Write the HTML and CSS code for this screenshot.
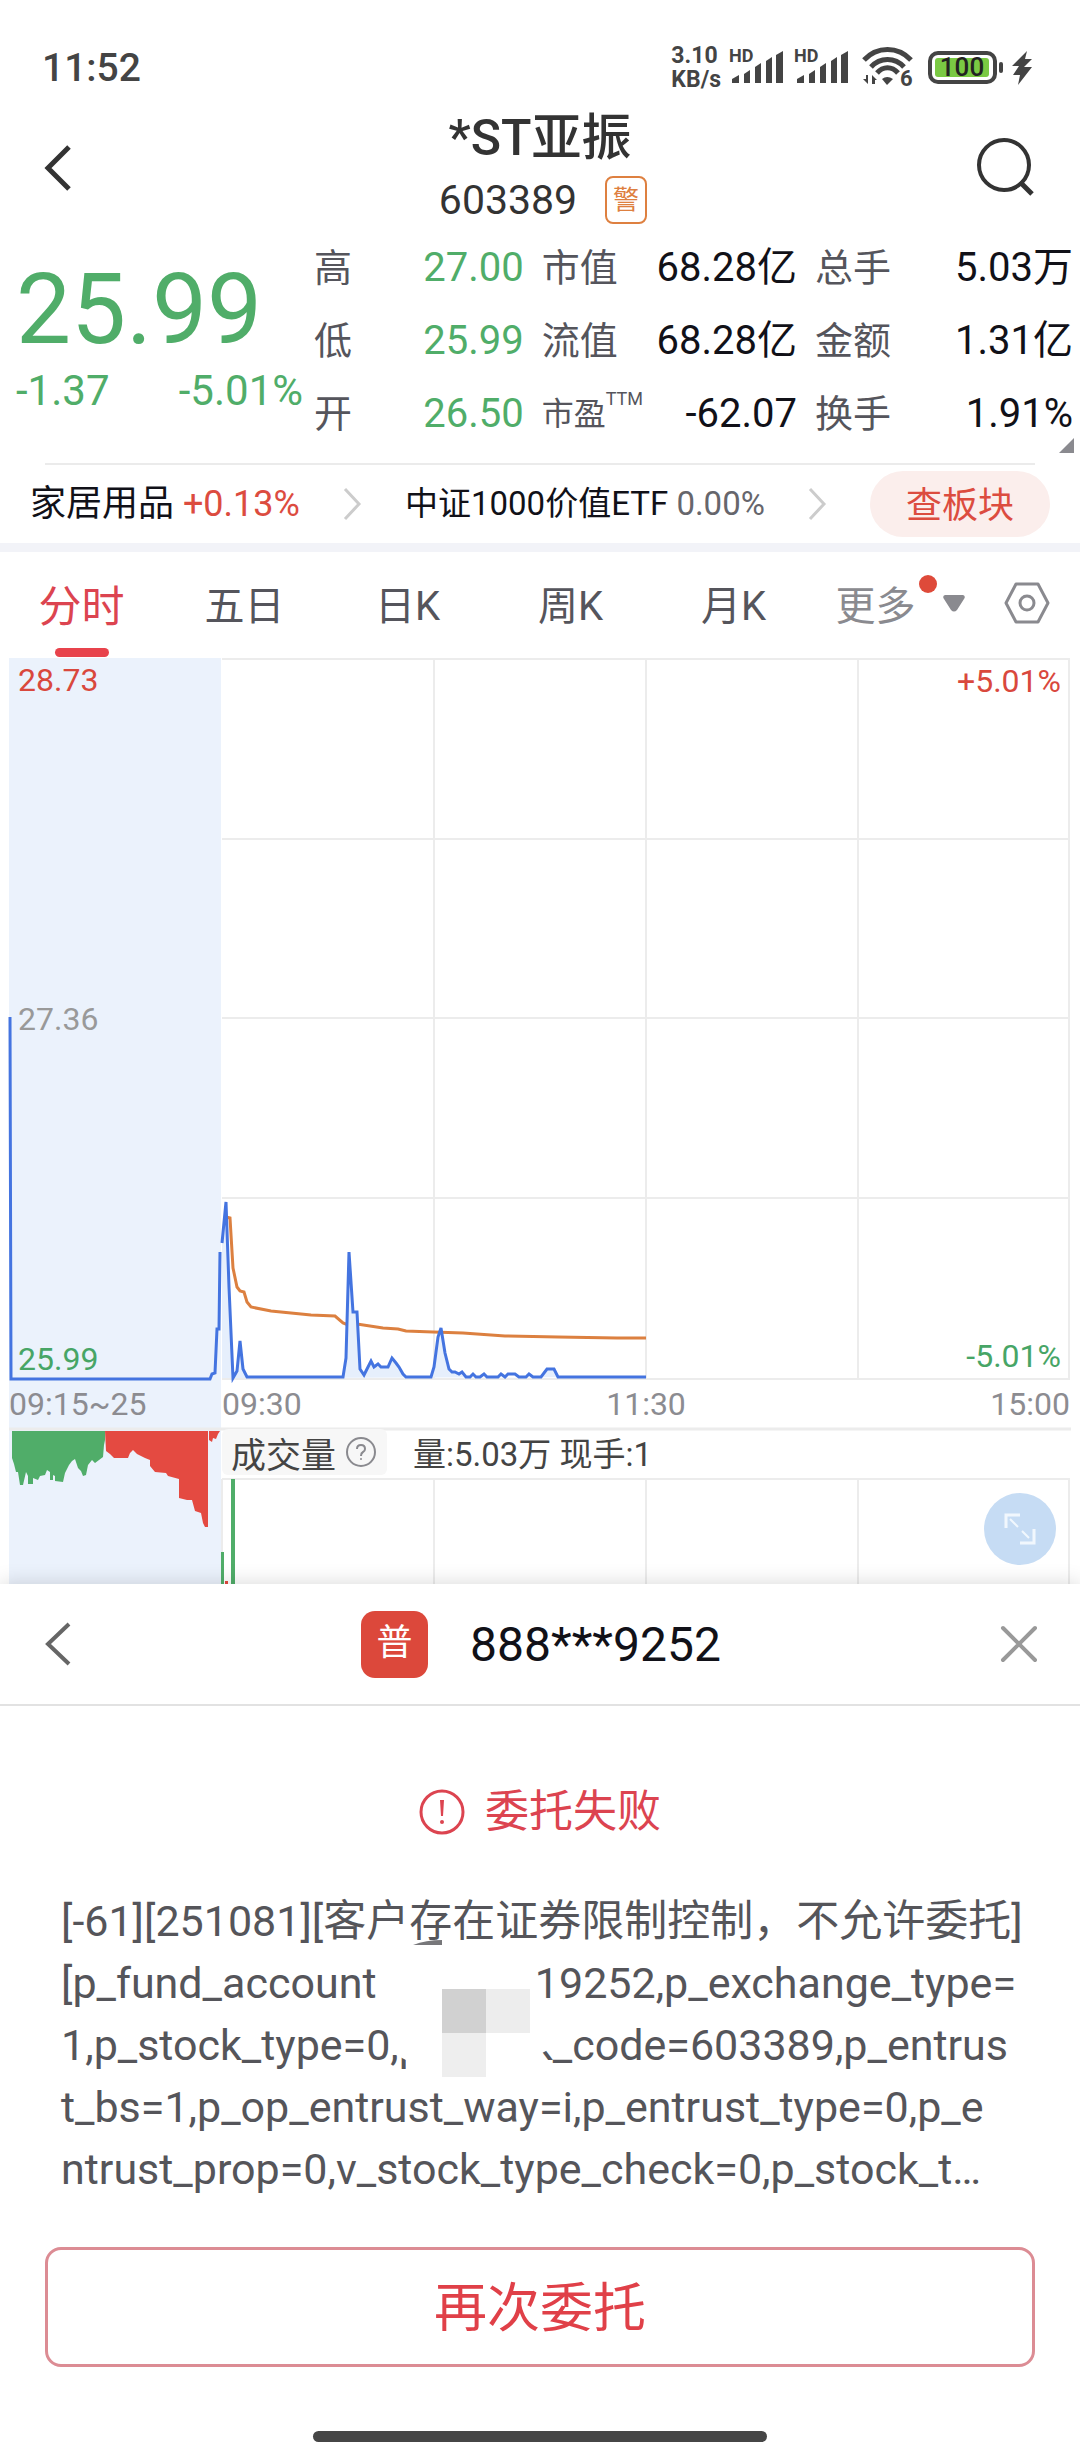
FILE: index.html
```html
<!DOCTYPE html>
<html lang="zh-CN">
<head>
<meta charset="utf-8">
<meta name="viewport" content="width=device-width, initial-scale=1.0">
<title>*ST亚振 603389</title>
<link rel="stylesheet" href="styles.css">
</head>
<body>

<div class="statusbar">
	<span class="clock">11:52</span>
	<div class="sys">
		<div class="speed"><div>3.10</div><div>KB/s</div></div>
		<svg class="signal" width="54" height="46" viewBox="0 -6 54 46">
			<text x="0" y="14" class="hd">HD</text>
			<path d="M3 35v-4l7-4v8zM15 35v-9l6-4v13zM26 35V19l6-4v20zM37 35V13l6-4v26zM47 35V7l7-4v32z"/>
		</svg>
		<svg class="signal" width="54" height="46" viewBox="0 -6 54 46">
			<text x="0" y="14" class="hd">HD</text>
			<path d="M3 35v-4l7-4v8zM15 35v-9l6-4v13zM26 35V19l6-4v20zM37 35V13l6-4v26zM47 35V7l7-4v32z"/>
		</svg>
		<svg class="wifi" width="54" height="50" viewBox="0 -3 54 50">
			<g fill="none" stroke="#444" stroke-width="5">
				<path d="M2 14C15 0 36 0 49 14"/>
				<path d="M9 21C18 11 33 11 42 21"/>
				<path d="M15 27C21 20 30 20 36 27"/>
			</g>
			<path d="M20 33q5-4 11 0l-6 6z"/>
			<path d="M6 29v9l-5-5h3v-4zM10 38v-9l5 5h-2v4z"/>
			<text x="38" y="40" class="six">6</text>
		</svg>
		<svg class="battery" width="76" height="34" viewBox="0 0 76 34">
			<rect x="2" y="2" width="65" height="29" rx="8" fill="#fff" stroke="#444" stroke-width="4"/>
			<rect x="7" y="7" width="54" height="19" rx="3" fill="#7ac943"/>
			<rect x="71" y="11" width="4" height="11" rx="2"/>
			<text x="34" y="25" text-anchor="middle" class="pct">100</text>
		</svg>
		<svg class="bolt" width="20" height="34" viewBox="0 0 20 34"><path d="M15 0L0 15h7l-6 9h7L6 34 20 16h-8l8-8h-7z"/></svg>
	</div>
</div>

<header class="topbar">
	<button class="icon-btn" aria-label="返回">
		<svg width="28" height="46" viewBox="0 0 28 46"><path d="M25 2L4 23l21 21" fill="none" stroke="#333" stroke-width="5"/></svg>
	</button>
	<div class="stock">
		<h1>*ST亚振</h1>
		<div class="code"><span>603389</span><span class="warn">警</span></div>
	</div>
	<button class="icon-btn" aria-label="搜索">
		<svg width="60" height="60" viewBox="0 0 60 60"><circle cx="28" cy="27" r="25" fill="none" stroke="#333" stroke-width="4"/><path d="M44 44l12 12" stroke="#333" stroke-width="5"/></svg>
	</button>
</header>

<section class="quote">
	<div class="now">
		<div class="price">25.99</div>
		<div class="change"><span>-1.37</span><span>-5.01%</span></div>
	</div>
	<table class="stats">
		<colgroup><col class="c1"><col class="c2"><col class="c3"><col class="c2"><col class="c4"><col class="c5"></colgroup>
		<tr><th>高</th><td class="down">27.00</td><th>市值</th><td>68.28亿</td><th>总手</th><td>5.03万</td></tr>
		<tr><th>低</th><td class="down">25.99</td><th>流值</th><td>68.28亿</td><th>金额</th><td>1.31亿</td></tr>
		<tr><th>开</th><td class="down">26.50</td><th class="pe">市盈<sup>TTM</sup></th><td>-62.07</td><th>换手</th><td>1.91%</td></tr>
	</table>
	<span class="corner"></span>
</section>

<div class="divider"></div>
<nav class="sectors">
	<a href="#" class="sector">家居用品 <span class="up">+0.13%</span></a>
	<svg class="arrow" width="20" height="34" viewBox="0 0 20 34"><path d="M3 2l14 15L3 32" fill="none" stroke="#ccc" stroke-width="3"/></svg>
	<a href="#" class="sector etf">中证1000价值ETF <span class="flat">0.00%</span></a>
	<svg class="arrow" width="20" height="34" viewBox="0 0 20 34"><path d="M3 2l14 15L3 32" fill="none" stroke="#ccc" stroke-width="3"/></svg>
	<button class="pill">查板块</button>
</nav>

<nav class="tabs">
	<button class="tab active">分时</button>
	<button class="tab">五日</button>
	<button class="tab">日K</button>
	<button class="tab">周K</button>
	<button class="tab">月K</button>
	<button class="tab more"><span class="more-text">更多<span class="dot"></span></span><svg width="22" height="17" viewBox="0 0 22 17"><path d="M2 0h18q3 1 1 4l-7 11q-3 3-6 0L1 4q-2-3 1-4z" fill="#8a8a8f"/></svg></button>
	<button class="tab gear" aria-label="设置">
		<svg width="46" height="42" viewBox="0 0 46 42"><path d="M12 2h22l10 19-10 19H12L2 21z" fill="none" stroke="#8a8a8f" stroke-width="3" stroke-linejoin="round"/><circle cx="23" cy="21" r="7" fill="none" stroke="#8a8a8f" stroke-width="3"/></svg>
	</button>
</nav>

<section class="chart">
	<svg class="plot" viewBox="0 0 1080 926">
		<rect x="9" y="0" width="212" height="926" fill="#ebf2fc"/>
		<!-- grid -->
		<g stroke="#ececec" stroke-width="2">
			<path d="M222 1H1070M222 181H1070M222 360H1070M222 540H1070M222 721H1070"/>
			<path d="M434 1V721M646 1V721M858 1V721M1069 1V721"/>
			<path d="M9 771H1071" stroke-width="3"/>
			<path d="M222 821H1070M222 821V926M434 821V926M646 821V926M858 821V926M1069 821V926"/>
		</g>
		<!-- average price -->
		<polyline class="avg" points="226,559 230,560 233,610 237,629 240,633 244,634 247,644 251,649 271,653 311,657 335,658 343,665 348,667 357,666 383,670 398,671 406,673 433,674 463,675 505,678 558,679 617,680 646,680"/>
		<!-- call auction -->
		<polyline class="line" points="10,359 11,721 210,721 212,716 215,715 217,671 219,671 220,594"/>
		<!-- price -->
		<polygon fill="#e6effc" points="222,585 226,544 229,629 233,720 237,713 240,683 243,711 247,719 343,719 346,700 349,594 353,654 357,654 360,711 364,717 371,703 374,709 388,709 392,700 399,709 406,719 431,719 434,709 438,679 441,670 445,695 449,711 466,719 541,719 547,711 554,711 558,719 646,719 222,720"/>
		<polyline class="line" points="222,585 226,544 229,629 233,720 237,713 240,683 243,711 247,719 343,719 346,700 349,594 353,654 357,654 360,711 364,717 367,711 371,703 374,709 378,706 381,709 388,709 392,700 396,705 399,709 403,716 406,719 431,719 434,709 438,679 441,670 445,695 449,711 452,714 455,714 459,716 462,714 466,719 470,719 473,716 476,719 480,719 484,716 487,719 498,719 501,716 505,719 508,716 515,716 519,719 526,719 529,716 533,719 541,719 547,711 554,711 558,719 646,719"/>
		<!-- volume -->
		<polygon fill="#50ad69" points="12,773 12,800 14,806 16,814 18,814 20,827 23,827 26,814 28,818 28,826 33,826 33,820 38,822 40,818 45,817 47,812 50,814 50,822 53,822 53,817 55,818 55,823 63,824 65,815 69,807 72,803 75,801 78,810 81,813 83,818 86,817 88,807 92,802 95,805 99,802 103,799 104,787 105,782 105,773"/>
		<polygon fill="#e44a41" points="105,773 106,793 110,796 114,800 128,800 130,795 133,792 137,796 145,800 150,802 150,808 155,814 166,815 168,818 179,821 179,840 187,842 192,842 195,853 201,855 203,865 205,869 208,869 208,773"/>
		<polygon fill="#e44a41" points="209,773 209,782 212,784 213,780 216,781 218,776 220,773"/>
		<path d="M221 894h3v32h-3zM231 821h4v105h-4z" fill="#50ad69"/>
		<path d="M225 923h3v3h-3z" fill="#e44a41"/>
		<!-- labels -->
		<g class="scale">
			<text x="18" y="33" fill="#d9483d">28.73</text>
			<text x="18" y="372" fill="#999">27.36</text>
			<text x="18" y="712" fill="#47a566">25.99</text>
			<text x="1061" y="34" text-anchor="end" fill="#d9483d">+5.01%</text>
			<text x="1061" y="709" text-anchor="end" fill="#47a566">-5.01%</text>
			<g fill="#8c8c91">
				<text x="9" y="757">09:15~25</text>
				<text x="222" y="757">09:30</text>
				<text x="646" y="757" text-anchor="middle">11:30</text>
				<text x="1070" y="757" text-anchor="end">15:00</text>
			</g>
		</g>
	</svg>
	<div class="volbar">
		<button class="indicator">成交量<svg width="30" height="30" viewBox="0 0 30 30"><circle cx="15" cy="15" r="14" fill="none" stroke="#8a8a8f" stroke-width="2"/><path d="M11 12q0-4 4-4t4 4q0 2-2 3t-2 4" fill="none" stroke="#8a8a8f" stroke-width="2"/><circle cx="15" cy="22" r="1" fill="#8a8a8f"/></svg></button>
		<span>量:5.03万 现手:1</span>
	</div>
	<button class="expand" aria-label="全屏">
		<svg width="34" height="34" viewBox="0 0 34 34" fill="none" stroke="#f1f7fd"><path d="M3 16V3h14M31 17v14H17" stroke-width="3"/><path d="M7 7l8 8M19 19l7 7" stroke-width="2"/></svg>
	</button>
</section>

<section class="sheet">
	<div class="sheet-head">
		<button class="icon-btn" aria-label="返回">
			<svg width="28" height="46" viewBox="0 0 28 46"><path d="M25 3L4 23l21 20" fill="none" stroke="#666" stroke-width="4"/></svg>
		</button>
		<div class="account"><span class="type">普</span><span>888***9252</span></div>
		<button class="icon-btn" aria-label="关闭">
			<svg width="38" height="38" viewBox="0 0 38 38"><path d="M3 3l32 32M35 3L3 35" stroke="#999" stroke-width="4" stroke-linecap="round"/></svg>
		</button>
	</div>

	<h2 class="fail">
		<svg width="46" height="46" viewBox="0 0 46 46"><circle cx="23" cy="23" r="21" fill="none" stroke="#dc4450" stroke-width="3"/><path d="M21 11h4l-1 16h-2z" fill="#dc4450"/><circle cx="23" cy="33" r="2" fill="#dc4450"/></svg>
		委托失败
	</h2>

	<div class="message">
		<p>[-61][251081][客户存在证券限制控制，不允许委托]</p>
		<p><span>[p_fund_account</span><span>19252,p_exchange_type=</span></p>
		<p class="code-line"><span>1,p_stock_type=0,p</span><span>k_code=603389,p_entrus</span></p>
		<p>t_bs=1,p_op_entrust_way=i,p_entrust_type=0,p_e</p>
		<p>ntrust_prop=0,v_stock_type_check=0,p_stock_t…</p>
		<!-- mosaic over the account number -->
		<svg class="mosaic" width="190" height="156" viewBox="0 0 190 156">
			<path d="M12 16H158L170 60 184 84 184 104 172 110 170 144H36V117L26 112 18 88 12 80z" fill="#fff"/>
			<path d="M43 2Q56-3 72-3V2z" fill="#77777a"/>
			<path d="M72 46h44v44H72z" fill="#d1d1d1"/>
			<path d="M116 46h44v44h-44z" fill="#ededed"/>
			<path d="M72 90h44v44H72z" fill="#eee"/>
		</svg>
	</div>

	<button class="retry">再次委托</button>
	<div class="homebar"></div>
</section>

</body>
</html>
```
FILE: styles.css
```css
* {
	box-sizing: border-box;
}

body {
	margin: 0;
	background: #fff;
	color: #111118;
	font-family: Roboto, "Noto Sans CJK SC", sans-serif;
	font-size: 40px;
}

button {
	border: 0;
	padding: 0;
	background: none;
	font-family: inherit;
	font-size: inherit;
	color: inherit;
}

svg {
	display: block;
}

a {
	color: inherit;
	text-decoration: none;
}

/* status bar */
.statusbar {
	display: flex;
	justify-content: space-between;
	align-items: center;
	height: 112px;
	padding: 24px 48px 0 42px;
	color: #444;
}

.statusbar svg {
	fill: #444;
}

.clock {
	font-size: 39px;
	font-weight: 500;
}

.sys {
	display: flex;
	align-items: center;
}

.speed {
	margin-right: 8px;
	font-size: 23px;
	line-height: 24px;
	font-weight: 700;
}

.signal {
	margin: 0 11px 6px 0;
}

.wifi {
	margin: 0 12px 0 3px;
}

.battery {
	margin-right: 8px;
}

.hd {
	font-size: 18px;
	font-weight: 700;
}

.six {
	font-size: 22px;
	font-weight: 700;
}

.pct {
	font-size: 26px;
	font-weight: 500;
	fill: #222;
}

/* title */
.topbar {
	display: flex;
	justify-content: space-between;
	align-items: center;
	height: 112px;
	padding: 0 44px;
}

.icon-btn {
	display: flex;
	align-items: center;
	width: 60px;
	height: 60px;
}

.icon-btn:last-child {
	justify-content: flex-end;
}

.stock {
	text-align: center;
	color: #333;
}

.stock h1 {
	margin: 0;
	font-size: 50px;
	line-height: 60px;
	font-weight: 500;
}

.code {
	display: flex;
	align-items: center;
	justify-content: center;
	gap: 28px;
	padding: 4px 0 0 6px;
	line-height: 56px;
	font-size: 41px;
}

.warn {
	width: 42px;
	height: 48px;
	border: 2px solid #de8040;
	border-radius: 8px;
	color: #de8040;
	font-size: 26px;
	line-height: 44px;
}

/* quote */
.quote {
	position: relative;
	display: flex;
	padding: 7px 7px 0 16px;
	height: 239px;
}

.now {
	width: 287px;
	margin-right: 11px;
	color: #50ad69;
}

.price {
	padding-top: 29px;
	font-size: 98px;
	line-height: 100px;
}

.change {
	display: flex;
	justify-content: space-between;
	font-size: 42px;
	line-height: 62px;
}

.stats {
	flex: 1;
	height: 219px;
	table-layout: fixed;
	border-collapse: collapse;
}

.c1 { width: 8%; }
.c2 { width: 22%; }
.c3 { width: 14%; }
.c4 { width: 13%; }
.c5 { width: 21%; }

.stats tr {
	height: 73px;
}

.stats th {
	padding: 0;
	text-align: left;
	font-weight: 400;
	color: #55555c;
	font-size: 38px;
	line-height: 48px;
	white-space: nowrap;
}

.stats td {
	padding: 0 18px 0 0;
	text-align: right;
	line-height: 48px;
	white-space: nowrap;
}

.stats td:last-child {
	padding-right: 0;
}

.stats .pe {
	font-size: 32px;
}

.pe sup {
	font-size: 18px;
	line-height: 20px;
	vertical-align: 20px;
}

.down {
	color: #50ad69;
}

.up {
	color: #dc4c3f;
}

.flat {
	color: #66666c;
}

.corner {
	position: absolute;
	right: 6px;
	bottom: 10px;
	border-left: 15px solid transparent;
	border-bottom: 15px solid #8a8a8f;
}

/* sectors */
.divider {
	height: 2px;
	margin: 0 45px;
	background: #ebebeb;
}

.sectors {
	display: flex;
	align-items: center;
	justify-content: space-between;
	height: 78px;
	padding: 0 30px;
	white-space: nowrap;
}

.sector {
	font-size: 36px;
	line-height: 46px;
}

.sector.etf {
	font-size: 33px;
}

.pill {
	width: 180px;
	height: 66px;
	padding-bottom: 4px;
	border-radius: 33px;
	background: #fbeeec;
	color: #dc4c3f;
	font-size: 36px;
}

/* tabs */
.tabs {
	display: grid;
	grid-template-columns: repeat(5, 163fr) 170fr 95fr;
	height: 115px;
	border-top: 9px solid #f2f3f8;
}

.tab {
	position: relative;
	padding-bottom: 4px;
	color: #55555c;
}

.tab.active {
	color: #dc4450;
	font-size: 43px;
}

.tab.active::after {
	content: "";
	position: absolute;
	left: calc(50% - 27px);
	bottom: 1px;
	width: 54px;
	height: 9px;
	border-radius: 5px;
	background: #e8434c;
}

.more {
	display: flex;
	align-items: center;
	justify-content: center;
	gap: 27px;
	color: #8a8a8f;
}

.more-text {
	position: relative;
}

.dot {
	position: absolute;
	top: 1px;
	right: -21px;
	width: 18px;
	height: 18px;
	border-radius: 9px;
	background: #de4a3a;
}

.gear svg {
	margin-left: 19px;
}

/* chart */
.chart {
	position: relative;
}

.plot {
	width: 100%;
}

.plot .line {
	fill: none;
	stroke: #4474e0;
	stroke-width: 3;
}

.plot .avg {
	fill: none;
	stroke: #dc8040;
	stroke-width: 3;
}

.scale {
	font-size: 32px;
}

.volbar {
	position: absolute;
	left: 222px;
	bottom: 108px;
	display: flex;
	align-items: center;
	gap: 26px;
	font-size: 33px;
	color: #444;
}

.indicator {
	display: flex;
	align-items: center;
	gap: 10px;
	height: 46px;
	padding: 0 11px 0 9px;
	border-radius: 6px;
	background: #f7f7f7;
	font-size: 35px;
}

.expand {
	position: absolute;
	right: 24px;
	bottom: 19px;
	display: flex;
	align-items: center;
	justify-content: center;
	width: 72px;
	height: 72px;
	border-radius: 36px;
	background: #c6dcf4;
}

/* order sheet */
.sheet {
	position: relative;
	background: #fff;
	box-shadow: 0 0 20px rgba(0, 0, 0, 0.16);
}

.sheet-head {
	display: flex;
	justify-content: space-between;
	align-items: center;
	height: 122px;
	padding: 0 42px 0 44px;
	border-bottom: 2px solid #e2e2e2;
}

.account {
	display: flex;
	align-items: center;
	gap: 42px;
	font-size: 48px;
}

.type {
	width: 67px;
	height: 67px;
	border-radius: 14px;
	background: #dc483b;
	color: #fff;
	font-size: 36px;
	line-height: 65px;
	text-align: center;
}

.fail {
	display: flex;
	align-items: center;
	justify-content: center;
	gap: 20px;
	margin: 72px 0 44px;
	font-size: 44px;
	line-height: 68px;
	font-weight: 400;
	color: #dc4450;
}

.message {
	position: relative;
	margin: 0 64px 0 61px;
	color: #55555a;
	font-size: 43px;
	line-height: 62px;
	white-space: nowrap;
}

.message p {
	display: flex;
	justify-content: space-between;
	margin: 0;
}

.message .code-line {
	padding-right: 8px;
}

.mosaic {
	position: absolute;
	left: 309px;
	top: 53px;
	overflow: visible;
}

.retry {
	display: block;
	width: calc(100% - 90px);
	height: 120px;
	margin: 47px 45px 64px;
	padding-bottom: 6px;
	border: 3px solid #dc8c94;
	border-radius: 16px;
	color: #e04048;
	font-size: 53px;
}

.homebar {
	width: 42%;
	height: 11px;
	margin: 0 auto;
	border-radius: 6px;
	background: #464646;
}
```
